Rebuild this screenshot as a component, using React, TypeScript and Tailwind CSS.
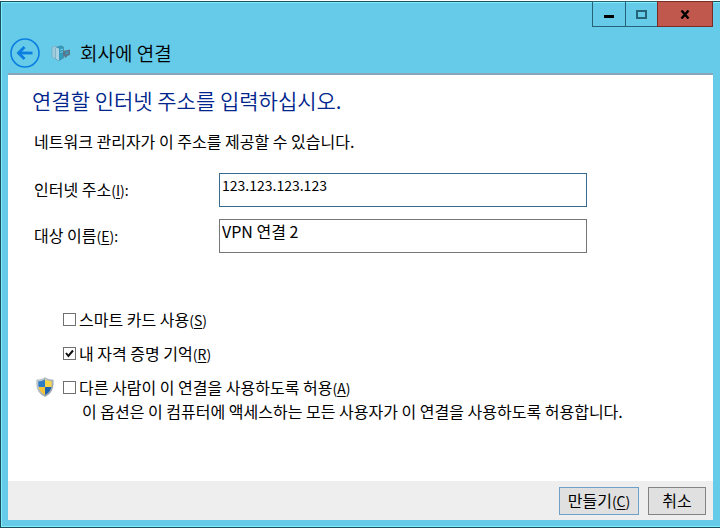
import { ReactNode, useState } from 'react';

function Key({ children, colon }: { children: string; colon?: boolean }) {
  return (
    <span className="text-[14px]">
      (<span className="underline underline-offset-2">{children}</span>){colon ? ':' : ''}
    </span>
  );
}

function BackArrow() {
  return (
    <svg viewBox="0 0 30 30" className="h-[30px] w-[30px]" fill="none" stroke="#0a7fe0" aria-hidden="true">
      <circle cx="15" cy="15" r="14" strokeWidth="1.6" />
      <path d="M8.5 15H22.5" strokeWidth="2.8" />
      <path d="M14.5 9L8.5 15L14.5 21" strokeWidth="2.8" />
    </svg>
  );
}

function ServerIcon() {
  return (
    <svg viewBox="0 0 20 16" className="h-4 w-5" aria-hidden="true">
      <path d="M1 2L4 1L7 2.5V13L4 14L1 12Z" fill="#9ccbdd" stroke="#74a6bb" strokeWidth=".6" />
      <path d="M5 2.5L10 .8L12.5 2V13L8 15.5L5 14Z" fill="#329cbd" stroke="#477f97" strokeWidth=".6" />
      <path d="M5 2.5L8 3.6V15.5L5 14Z" fill="#a9d3e2" />
      <path d="M9.2 5L12 4M9.2 7.5L12 6.5" stroke="#91d8eb" strokeWidth=".8" />
      <path d="M12 6L19 4.5V10L16 11V12.2L13.5 12.6V11L12 10.6Z" fill="#5d7686" />
      <path d="M14.3 6.8L17.8 6V9L14.3 9.8Z" fill="#3f91ba" />
    </svg>
  );
}

function ShieldIcon() {
  return (
    <svg viewBox="0 0 18 20" className="h-5 w-[18px]" aria-hidden="true">
      <defs>
        <clipPath id="shield">
          <path d="M9 2.2C7 3.6 4.8 4.2 2.3 4.2C2 10.5 3.5 15 9 17.9C14.5 15 16 10.5 15.7 4.2C13.2 4.2 11 3.6 9 2.2Z" />
        </clipPath>
        <linearGradient id="rim" x1="0" y1="0" x2="1" y2="1">
          <stop offset="0" stopColor="#d5dde2" />
          <stop offset="1" stopColor="#89959d" />
        </linearGradient>
      </defs>
      <path
        d="M9 .6C6.8 2.3 4.2 3 .9 2.9C.2 11 2.4 16.5 9 19.5C15.6 16.5 17.8 11 17.1 2.9C13.8 3 11.2 2.3 9 .6Z"
        fill="url(#rim)"
        stroke="#98a3aa"
        strokeWidth=".6"
      />
      <g clipPath="url(#shield)">
        <path d="M0 0H9V10H0Z" fill="#2f7cc6" />
        <path d="M9 0H18V10H9Z" fill="#f7d54b" />
        <path d="M0 10H9V20H0Z" fill="#f3c43a" />
        <path d="M9 10H18V20H9Z" fill="#1e62ae" />
      </g>
    </svg>
  );
}

function TextRow({ id, label, hotkey, initial, tone }: {
  id: string; label: string; hotkey: string; initial: string; tone: string;
}) {
  const [value, setValue] = useState(initial);
  return (
    <div className="flex items-center">
      <label htmlFor={id} className="w-[185px] shrink-0 pb-0.5">
        {label}<Key colon>{hotkey}</Key>
      </label>
      <input
        id={id}
        type="text"
        value={value}
        onChange={(e) => setValue(e.target.value)}
        className={`h-[34px] w-full max-w-[368px] border bg-white px-0.5 pb-2.5 outline-none ${tone}`}
      />
    </div>
  );
}

function Option({ id, checked, hotkey, children, shield }: {
  id: string; checked?: boolean; hotkey: string; children: ReactNode; shield?: boolean;
}) {
  return (
    <div className="flex h-6 items-center">
      <span className="w-[27px]">{shield && <ShieldIcon />}</span>
      <span className="mr-[3px] grid">
        <input
          id={id}
          type="checkbox"
          defaultChecked={checked}
          className="peer col-start-1 row-start-1 h-[13px] w-[13px] appearance-none border border-[#707070] bg-white"
        />
        <svg
          viewBox="0 0 13 13"
          className="pointer-events-none invisible col-start-1 row-start-1 h-[13px] w-[13px] peer-checked:visible"
          aria-hidden="true"
        >
          <path d="M3 6L5.4 9L10 3.5" fill="none" stroke="#111" strokeWidth="2" />
        </svg>
      </span>
      <label htmlFor={id}>{children}<Key>{hotkey}</Key></label>
    </div>
  );
}

export default function App() {
  return (
    <div className="flex min-h-screen flex-col bg-white pt-px font-['Noto_Sans_CJK_KR',sans-serif] text-[16px] leading-6 text-black">
      <div className="flex flex-1 flex-col border-y border-l border-[#1d4e60] bg-[#66cae9]">
        <div className="flex flex-1 flex-col border-y border-l border-[#7df0fa] pr-[7px] pb-1.5 pl-1.5">
          <header>
            <div className="-mt-0.5 flex h-[26px] justify-end">
              <button type="button" aria-label="최소화" className="flex w-[34px] items-center justify-center border border-[#256478]">
                <span className="mt-1 h-[3px] w-2.5 bg-black" />
              </button>
              <button type="button" aria-label="최대화" className="flex w-[31px] items-center justify-center border-y border-[#256478]">
                <span className="h-[9px] w-[11px] border-2 border-[#256478]" />
              </button>
              <button type="button" aria-label="닫기" className="flex w-14 items-center justify-center border border-[#7b2a25] bg-[#c1584e]">
                <svg viewBox="0 0 10 9" className="h-[9px] w-2.5" aria-hidden="true">
                  <path d="M1.5 .5L8.5 8.5M8.5 .5L1.5 8.5" stroke="#000" strokeWidth="2.4" />
                </svg>
              </button>
            </div>
            <div className="flex h-[46px] items-center pt-1.5 pl-0.5">
              <button type="button" aria-label="뒤로"><BackArrow /></button>
              <span className="ml-[11px]"><ServerIcon /></span>
              <h1 className="ml-[9px] text-[19px] font-[350]">회사에 연결</h1>
            </div>
          </header>
          <main className="flex flex-1 flex-col border-t-2 border-[#8aa5b8] bg-white">
            <form className="flex flex-1 flex-col" onSubmit={(e) => e.preventDefault()}>
              <div className="flex-1 px-[26px] pt-[11px]">
                <h2 className="-ml-0.5 text-[21px] leading-7 font-[350] text-[#00258c]">연결할 인터넷 주소를 입력하십시오.</h2>
                <p className="mt-[15px]">네트워크 관리자가 이 주소를 제공할 수 있습니다.</p>
                <div className="mt-5 flex flex-col gap-3">
                  <TextRow id="address" label="인터넷 주소" hotkey="I" initial="123.123.123.123" tone="border-[#396b91] text-[14px]" />
                  <TextRow id="name" label="대상 이름" hotkey="E" initial="VPN 연결 2" tone="border-[#777777] text-[16px]" />
                </div>
                <div className="mt-[54px] flex flex-col gap-2.5 pl-0.5">
                  <Option id="card" hotkey="S">스마트 카드 사용</Option>
                  <Option id="remember" hotkey="R" checked>내 자격 증명 기억</Option>
                  <Option id="share" hotkey="A" shield>다른 사람이 이 연결을 사용하도록 허용</Option>
                </div>
                <p className="pl-12">이 옵션은 이 컴퓨터에 액세스하는 모든 사용자가 이 연결을 사용하도록 허용합니다.</p>
              </div>
              <footer className="flex justify-end gap-[9px] bg-[#eeeeee] px-[7px] pt-1.5 pb-[5px]">
                <button type="submit" className="flex h-7 w-20 items-center justify-center border border-[#6fa0c8] bg-[#e0e0e0] pb-0.5">
                  <span>만들기<Key>C</Key></span>
                </button>
                <button type="button" className="flex h-7 w-[58px] items-center justify-center border border-[#838383] bg-[#e0e0e0] pb-0.5">취소</button>
              </footer>
            </form>
          </main>
        </div>
      </div>
    </div>
  );
}
